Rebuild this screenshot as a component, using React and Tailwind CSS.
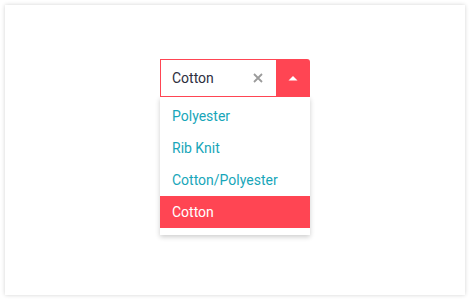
import React, { useState } from 'react';

const options = ['Polyester', 'Rib Knit', 'Cotton/Polyester', 'Cotton'];

export default function App() {
  const [value, setValue] = useState('Cotton');

  return (
    <div className="h-[300px] w-[470px] bg-white p-[5px]" style={{ fontFamily: 'Roboto, "Noto Sans", sans-serif' }}>
      <div className="flex h-full w-full flex-col items-center bg-white pt-[54px] shadow-[0_0_4px_rgba(0,0,0,0.18)]">
        <div className="w-[150px]">
          <div className="flex h-[38px]">
            <div className="flex flex-1 items-center border border-r-0 border-[#ff4553] bg-white pl-[11px] pr-[13px]">
              <span className="flex-1 text-[14px] text-[#2d2e3e]">{value}</span>
              <svg width="10" height="10" viewBox="0 0 10 10" className="text-[#9b9b9b]">
                <path d="M1 1L9 9M9 1L1 9" stroke="currentColor" strokeWidth="1.8" />
              </svg>
            </div>
            <button className="flex w-[34px] items-center justify-center rounded-tr-[3px] bg-[#ff4553]">
              <svg width="10" height="6" viewBox="0 0 10 6">
                <path d="M0.5 5.5L5 1L9.5 5.5Z" fill="white" />
              </svg>
            </button>
          </div>
          <ul className="bg-white pt-[3px] pb-[7px] shadow-[0_2px_5px_rgba(0,0,0,0.2)]">
            {options.map((opt) => (
              <li
                key={opt}
                onClick={() => setValue(opt)}
                className={
                  opt === value
                    ? 'flex h-[32px] items-center bg-[#ff4553] pl-[12px] text-[14px] text-white'
                    : 'flex h-[32px] items-center pl-[12px] text-[14px] text-[#17a6b9]'
                }
              >
                {opt}
              </li>
            ))}
          </ul>
        </div>
      </div>
    </div>
  );
}
